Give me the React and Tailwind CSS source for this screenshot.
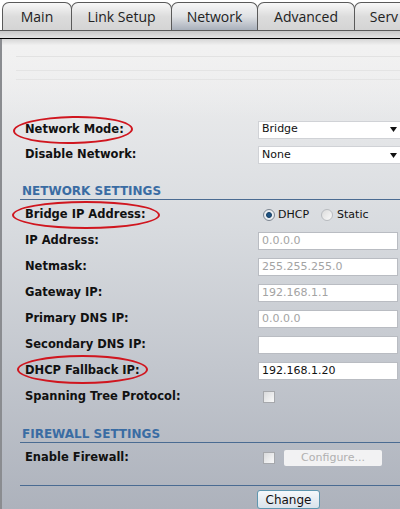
import React from "react";

const sans = "font-['DejaVu_Sans',Verdana,sans-serif]";

function Tab({ label, w, active }) {
  return (
    <div
      className={
        active
          ? `${w} -ml-px h-[28px] shrink-0 border border-b-0 border-[#5a5a5a] rounded-t-[7px] bg-gradient-to-b from-[#f7f7f7] via-[#dfe1e4] to-[#a9b0bb] flex items-center justify-center text-[14px] text-[#222] font-['Open_Sans',sans-serif]`
          : `${w} -ml-px h-[28px] shrink-0 border border-b-0 border-[#5a5a5a] rounded-t-[7px] bg-gradient-to-b from-[#f8f8f8] via-[#dcdcdc] to-[#d4d4d4] flex items-center justify-center text-[14px] text-[#222] font-['Open_Sans',sans-serif]`
      }
    >
      {label}
    </div>
  );
}

function Row({ label, children, h = "h-[26px]", ring }) {
  return (
    <div className={`relative flex items-center ${h}`}>
      <div className={`w-[256px] shrink-0 pl-[23px] text-[11.5px] font-bold text-[#111] ${sans}`}>{label}</div>
      <div className="flex items-center">{children}</div>
      {ring}
    </div>
  );
}

function Field({ value, dim }) {
  return (
    <div
      className={`w-[140px] h-[18px] border border-[#b9bcc2] bg-white px-[3px] flex items-center text-[11px] ${sans} ${
        dim ? "text-[#a3a3a3]" : "text-[#111]"
      }`}
    >
      {value}
    </div>
  );
}

function Dropdown({ value }) {
  return (
    <div className={`w-[145px] h-[18px] border-y border-l border-[#d0d2d6] bg-white pl-[3px] pr-[6px] flex items-center justify-between text-[11px] text-[#111] ${sans}`}>
      <span>{value}</span>
      <svg width="7" height="5" viewBox="0 0 7 5">
        <path d="M0 0h7L3.5 5z" fill="#111" />
      </svg>
    </div>
  );
}

function Check() {
  return <div className="w-[12px] h-[12px] border border-[#a6a8ac] bg-gradient-to-br from-[#d9dadc] to-[#fafafa]" />;
}

function Heading({ text }) {
  return (
    <div className={`ml-[18px] h-[17px] pl-[2px] border-b border-[#4a6b92] flex items-center text-[12px] font-bold text-[#3a6ca3] ${sans}`}>
      {text}
    </div>
  );
}

function Ring({ className }) {
  return <div className={`absolute border-2 border-[#d0161f] rounded-[50%] pointer-events-none ${className}`} />;
}

export default function App() {
  return (
    <div className="w-[400px] h-[509px] overflow-hidden bg-white flex flex-col">
      {/* tabs */}
      <div className="h-[30px] pt-[2px] pl-[3px] flex items-end shrink-0">
        <Tab label="Main" w="w-[70px]" />
        <Tab label="Link Setup" w="w-[101px]" />
        <Tab label="Network" w="w-[87px]" active />
        <Tab label="Advanced" w="w-[98px]" />
        <Tab label="Serv" w="w-[60px]" />
      </div>
      <div className="h-[8px] shrink-0 border-t border-[#5a5a5a] bg-gradient-to-b from-[#c9c9c9] to-[#e3e3e3]" />
      <div className="h-px shrink-0 bg-black" />

      {/* content */}
      <div className="flex-1 border-l-2 border-[#8a8c90] bg-gradient-to-b from-[#f1f1f1] via-[#d8dbdf] via-40% to-[#adb2bc] flex flex-col">
        <div className="h-[78px] shrink-0 pl-[14px] flex flex-col bg-gradient-to-b from-[#d6d6d6] via-[#f1f1f1] via-[8%] to-transparent">
          <div className="mt-[17px] h-px bg-[#e2e2e2]" />
          <div className="mt-[13px] h-px bg-[#e4e4e4]" />
          <div className="mt-[8px] h-px bg-[#e4e4e4]" />
        </div>

        <Row
          label="Network Mode:"
          h="h-[25px]"
          ring={<Ring className="left-[11px] top-[-1px] w-[120px] h-[28px] -rotate-1" />}
        >
          <Dropdown value="Bridge" />
        </Row>
        <Row label="Disable Network:">
          <Dropdown value="None" />
        </Row>

        <div className="mt-[15px]">
          <Heading text="NETWORK SETTINGS" />
        </div>

        <div className="mt-[2px] flex flex-col">
          <Row label="Bridge IP Address:" ring={<Ring className="left-[10px] top-[-1px] w-[148px] h-[28px]" />}>
            <div className={`ml-[5px] flex items-center text-[11px] text-[#111] ${sans}`}>
              <div className="w-[12px] h-[12px] rounded-full border border-[#7c8590] bg-[#e9ecef] flex items-center justify-center">
                <div className="w-[6px] h-[6px] rounded-full bg-[#1f5485] border border-[#163e63]" />
              </div>
              <span className="ml-[3px]">DHCP</span>
              <div className="ml-[12px] w-[12px] h-[12px] rounded-full border border-[#b8bbbf] bg-gradient-to-br from-[#dcdcdc] to-[#fafafa]" />
              <span className="ml-[4px]">Static</span>
            </div>
          </Row>
          <Row label="IP Address:">
            <Field value="0.0.0.0" dim />
          </Row>
          <Row label="Netmask:">
            <Field value="255.255.255.0" dim />
          </Row>
          <Row label="Gateway IP:">
            <Field value="192.168.1.1" dim />
          </Row>
          <Row label="Primary DNS IP:">
            <Field value="0.0.0.0" dim />
          </Row>
          <Row label="Secondary DNS IP:">
            <Field value="" />
          </Row>
          <Row label="DHCP Fallback IP:" ring={<Ring className="left-[15px] top-[-3px] w-[131px] h-[29px]" />}>
            <Field value="192.168.1.20" />
          </Row>
          <Row label="Spanning Tree Protocol:">
            <div className="ml-[5px]">
              <Check />
            </div>
          </Row>
        </div>

        <div className="mt-[16px]">
          <Heading text="FIREWALL SETTINGS" />
        </div>

        <div className="mt-[2px]">
          <Row label="Enable Firewall:">
            <div className="ml-[5px] flex items-center">
              <Check />
              <div className={`ml-[9px] w-[98px] h-[16px] rounded-[2px] bg-[#f2f2f3] flex items-center justify-center text-[11px] text-[#b0b0b0] ${sans}`}>
                Configure...
              </div>
            </div>
          </Row>
        </div>

        <div className="mt-[14px] ml-[18px] h-px bg-[#4a6b92]" />

        <div className="mt-[4px] pl-[255px]">
          <div className={`w-[63px] h-[19px] rounded-[3px] border border-[#5f97b0] bg-gradient-to-b from-[#f5f8fb] to-[#d9e3eb] flex items-center justify-center text-[12px] text-[#111] ${sans}`}>
            Change
          </div>
        </div>
      </div>
    </div>
  );
}
